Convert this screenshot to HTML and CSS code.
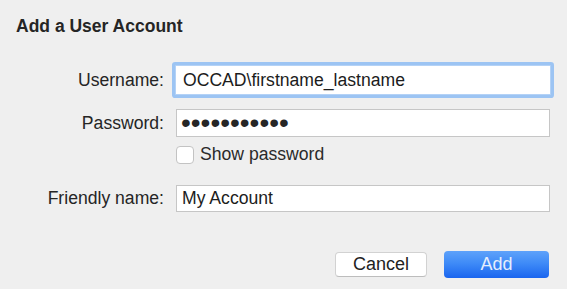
FILE: index.html
```html
<!DOCTYPE html>
<html lang="en">
<head>
  <meta charset="UTF-8">
  <meta name="viewport" content="width=device-width, initial-scale=1.0">
  <title>Add a User Account</title>
  <link rel="stylesheet" href="styles.css">
</head>
<body>
  <div class="dialog">
    <h1 class="dialog-title">Add a User Account</h1>

    <div class="row row-user">
      <label class="label" for="username">Username:</label>
      <input class="field focused" id="username" type="text" value="OCCAD\firstname_lastname">
    </div>

    <div class="row row-pass">
      <label class="label" for="password">Password:</label>
      <input class="field password" id="password" type="password" value="secretpass1">
    </div>

    <div class="row row-check">
      <span class="label"></span>
      <label class="check">
        <input type="checkbox" class="checkbox">
        <span>Show password</span>
      </label>
    </div>

    <div class="row row-friendly">
      <label class="label" for="friendly">Friendly name:</label>
      <input class="field" id="friendly" type="text" value="My Account">
    </div>

    <div class="actions">
      <button class="btn btn-cancel">Cancel</button>
      <button class="btn btn-add">Add</button>
    </div>
  </div>
</body>
</html>
```

FILE: styles.css
```css
* {
  margin: 0;
  padding: 0;
  box-sizing: border-box;
}

body {
  font-family: 'Liberation Sans', Arial, sans-serif;
  font-size: 17.6px;
  background-color: #efefef;
  color: #252525;
  min-height: 100vh;
  overflow: hidden;
}

.dialog {
  padding: 16px 17px 0 16px;
}

.dialog-title {
  font-size: 17.5px;
  font-weight: bold;
  line-height: 20px;
  color: #252525;
}

.row {
  display: flex;
  align-items: center;
  gap: 12px;
}

.row-user {
  margin-top: 30px;
}

.row-pass {
  margin-top: 15px;
}

.row-check {
  margin-top: 8px;
  height: 19px;
}

.row-friendly {
  margin-top: 21px;
}

.label {
  width: 148px;
  flex-shrink: 0;
  text-align: right;
}

.field {
  flex: 1;
  height: 28px;
  border: 1px solid #c6c6c6;
  background-color: #fff;
  padding: 0 5px;
  font-family: inherit;
  font-size: 17.6px;
  color: #1c1c1c;
  outline: none;
}

.row-friendly .field {
  height: 27px;
}

/* focus ring sits 4px outside the white area */
.field.focused {
  height: 30px;
  margin: -1px;
  padding: 0 6px 0 7px;
  border-color: #b4d2f6;
  border-radius: 1px;
  box-shadow: 0 0 0 3px #9cc4f3;
}

.field.password {
  font-size: 28px;
  padding-left: 4px;
  color: #262626;
}

.check {
  display: flex;
  align-items: center;
  gap: 6px;
  color: #2a2a2a;
}

.checkbox {
  appearance: none;
  -webkit-appearance: none;
  width: 18px;
  height: 18px;
  border: 1px solid #c3c3c3;
  border-radius: 4px;
  background-color: #fff;
}

.actions {
  margin-top: 39px;
  margin-right: 1px;
  display: flex;
  justify-content: flex-end;
  align-items: center;
  gap: 17px;
}

.btn {
  font-family: inherit;
  font-size: 18px;
  border-radius: 4px;
  cursor: pointer;
}

.btn-cancel {
  width: 92px;
  height: 25px;
  background-color: #fff;
  color: #222;
  border: 1px solid #d2d2d2;
  border-bottom-color: #bdbdbd;
}

.btn-add {
  width: 105px;
  height: 27px;
  border: none;
  color: #e4eefd;
  background: linear-gradient(to bottom, #5ea2fa 0%, #3f8bf7 45%, #1a65ef 100%);
}
```
